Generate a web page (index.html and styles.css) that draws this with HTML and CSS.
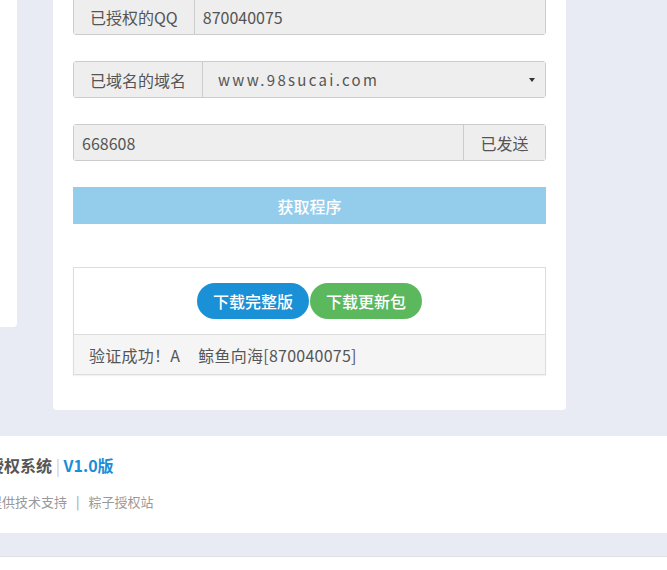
FILE: index.html
```html
<!DOCTYPE html>
<html lang="zh-CN">
<head>
    <meta charset="UTF-8">
    <meta name="viewport" content="width=device-width, initial-scale=1.0">
    <title>授权系统</title>
    <link rel="stylesheet" href="styles.css">
</head>
<body>
    <div class="layout">
        <div class="sidebar"></div>

        <div class="card">
            <div class="input-group">
                <span class="addon">已授权的QQ</span>
                <input type="text" class="form-control" value="870040075" readonly>
            </div>

            <div class="input-group">
                <span class="addon">已域名的域名</span>
                <div class="select-wrap">
                    <select class="form-control domain">
                        <option>www.98sucai.com</option>
                    </select>
                    <span class="caret"></span>
                </div>
            </div>

            <div class="input-group">
                <input type="text" class="form-control" value="668608" readonly>
                <button type="button" class="addon addon-btn">已发送</button>
            </div>

            <button type="button" class="btn-get">获取程序</button>

            <div class="panel">
                <div class="panel-body">
                    <button type="button" class="btn-round btn-blue">下载完整版</button><button type="button" class="btn-round btn-green">下载更新包</button>
                </div>
                <div class="panel-footer">验证成功！A<span class="gap"></span>鲸鱼向海[870040075]</div>
            </div>
        </div>
    </div>

    <footer class="footer">
        <div class="footer-inner">
            <h4 class="footer-title">粽子云授权系统 <span class="sep">|</span> <span class="ver">V1.0版</span></h4>
            <p class="footer-links">粽子站提供技术支持<span class="sep">|</span>粽子授权站</p>
        </div>
    </footer>
    <div class="bottom-line"></div>
</body>
</html>
```

FILE: styles.css
```css
* {
    margin: 0;
    padding: 0;
    box-sizing: border-box;
}

body {
    font-family: "Noto Sans CJK SC", "Noto Sans", sans-serif;
    background: #e8ebf3;
    color: #555;
    font-size: 16px;
    overflow: hidden;
}

.layout {
    display: flex;
    align-items: flex-start;
    gap: 36px;
    margin-top: -22px;
}

.sidebar {
    width: 17px;
    height: 349px;
    background: #fff;
    border-radius: 0 0 4px 0;
}

.card {
    width: 513px;
    background: #fff;
    padding: 20px 20px 35px;
    border-radius: 0 0 4px 4px;
}

.input-group {
    display: flex;
    height: 37px;
    margin-bottom: 26px;
    border: 1px solid #ccc;
    border-radius: 3px;
    background: #eee;
}

.addon {
    display: flex;
    align-items: center;
    padding: 0 16px;
    background: #eee;
    color: #555;
    font: inherit;
    font-size: 16px;
    border: none;
    border-right: 1px solid #ccc;
    white-space: nowrap;
}

.addon-btn {
    border-right: none;
    border-left: 1px solid #ccc;
    width: 82px;
    justify-content: center;
}

.form-control {
    flex: 1;
    min-width: 0;
    border: none;
    background: #eee;
    color: #555;
    font: inherit;
    font-size: 16px;
    padding: 0 8px;
    outline: none;
}

.select-wrap {
    flex: 1;
    position: relative;
    display: flex;
}

.domain {
    appearance: none;
    -webkit-appearance: none;
    padding-left: 15px;
    letter-spacing: 2.3px;
    font-size: 15px;
}

.caret {
    position: absolute;
    right: 10px;
    top: 16px;
    border-left: 3px solid transparent;
    border-right: 3px solid transparent;
    border-top: 4px solid #333;
}

.btn-get {
    display: block;
    width: 100%;
    height: 37px;
    margin-bottom: 43px;
    border: none;
    background: #94cdec;
    color: #fff;
    font: inherit;
    font-size: 16px;
    font-weight: 500;
}

.panel {
    border: 1px solid #ddd;
    box-shadow: 0 1px 1px rgba(0,0,0,0.05);
}

.panel-body {
    display: flex;
    justify-content: center;
    padding: 15px;
    background: #fff;
}

.btn-round {
    height: 36px;
    padding: 0 16px;
    border: none;
    border-radius: 18px;
    color: #fff;
    font: inherit;
    font-size: 16px;
    font-weight: 500;
}

.btn-blue {
    background: #1a90d7;
    margin-right: 1px;
}

.btn-green {
    background: #5cb85c;
}

.panel-footer {
    height: 40px;
    display: flex;
    align-items: center;
    padding: 0 15px;
    background: #f5f5f5;
    border-top: 1px solid #ddd;
    color: #555;
    letter-spacing: 0.25px;
}

.panel-footer .gap {
    width: 18px;
}

.footer {
    margin-top: 26px;
    height: 97px;
    background: #fff;
    overflow: hidden;
}

.footer-inner {
    margin-left: -60px;
    padding-top: 17px;
    white-space: nowrap;
}

.footer-title {
    font-size: 16px;
    line-height: 24px;
    font-weight: bold;
    color: #555;
    margin-bottom: 15px;
}

.footer-title .sep {
    color: #ccc;
    font-weight: normal;
}

.footer-title .ver {
    color: #1a8ed6;
}

.footer-links {
    padding-left: 10px;
    font-size: 13px;
    line-height: 20px;
    color: #999;
}

.footer-links .sep {
    margin: 0 9px;
}

.bottom-line {
    margin-top: 23px;
    height: 20px;
    border-top: 1px solid #dde0e8;
    background: #fff;
}
```
